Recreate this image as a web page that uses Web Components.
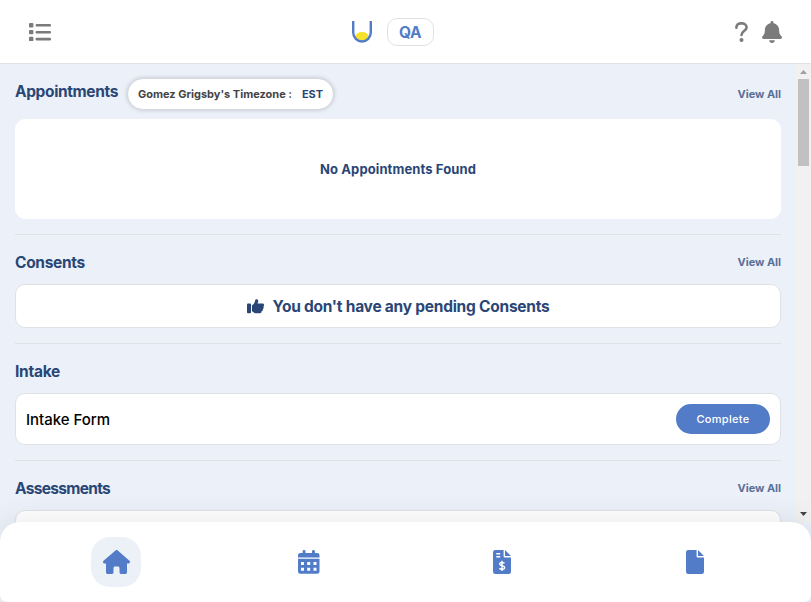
<!DOCTYPE html>
<html lang="en"><head><meta charset="utf-8"><title>Home</title>
<style>body{margin:0;width:811px;height:602px;overflow:hidden;background:#ecf1f9;font-family:Inter,"Liberation Sans",sans-serif}</style></head>
<body><portal-app></portal-app>
<script>
const define=(name,html,after)=>customElements.define(name,class extends HTMLElement{
  connectedCallback(){
    if(this.shadowRoot)return;
    const t=document.createElement('template');t.innerHTML=html;
    this.attachShadow({mode:'open'}).append(t.content.cloneNode(true));
    if(after)after(this);
  }});

// Text that spreads its letters to an exact line width.
define('fit-text','<style>:host{display:inline-block;white-space:nowrap}span{display:inline-block}</style><span><slot></slot></span>',el=>{
  const s=el.shadowRoot.querySelector('span'),w=+el.getAttribute('w'),n=el.textContent.length;
  const fit=()=>{s.style.letterSpacing='0';s.style.letterSpacing=((w-s.getBoundingClientRect().width)/n)+'px'};
  fit();
});

const icons={
list:['0 0 22 18','<rect x="0" y="0" width="4.4" height="4.4" rx="1"/><rect x="0" y="6.9" width="4.4" height="4.4" rx="1"/><rect x="0" y="13.8" width="4.4" height="4.4" rx="1"/><rect x="6.6" y="1" width="15.4" height="2.6" rx="1.2"/><rect x="6.6" y="7.9" width="15.4" height="2.6" rx="1.2"/><rect x="6.6" y="14.8" width="15.4" height="2.6" rx="1.2"/>'],
logo:['0 0 20 22','<ellipse cx="10" cy="15.8" rx="6.8" ry="4.8" fill="#f6e22c"/><path d="M1.2 0V11.6a8.8 8.9 0 0 0 17.6 0V0" fill="none" stroke="#527cc8" stroke-width="2.4"/>'],
help:['0 0 13 20','<path d="M1.4 5.8V5.3A4 4 0 0 1 5.4 1.4H7.4A4.2 4.2 0 0 1 11.6 5.5C11.6 8.6 6.5 9 6.5 13" fill="none" stroke="currentColor" stroke-width="2.6" stroke-linecap="round"/><circle cx="6.5" cy="17.9" r="2"/>'],
bell:['0 0 448 512','<path d="M224 0c-17.7 0-32 14.3-32 32V51.200C119 66 64 130.600 64 208v18.800c0 47-17.300 92.400-48.500 127.600l-7.400 8.300c-8.400 9.400-10.400 22.900-5.300 34.400S19.400 416 32 416H416c12.600 0 24-7.400 29.200-18.900s3.100-25-5.300-34.400l-7.400-8.300C401.300 319.200 384 273.900 384 226.800V208c0-77.400-55-142-128-156.800V32c0-17.700-14.300-32-32-32zm45.300 493.300c12-12 18.700-28.300 18.700-45.300H160c0 17 6.700 33.300 18.700 45.300S207 512 224 512s33.300-6.700 45.300-18.700z"/>'],
thumb:['0 0 16 15','<rect y="4.6" width="3.8" height="9.7" rx="1"/><path d="M4.7 6.2C7 5 7.300 3.300 7.700 1.200C8 0 9 0 9.800.5C11 1.300 10.700 3 9.800 4.600H14.500C16.300 4.600 16.500 7 15.300 7.500C16.200 8.400 15.700 9.700 14.800 10C15.300 11 14.700 12 13.700 12.100C14 13.300 13.200 14.300 12.200 14.300H8.500C6.700 14.300 5.800 12.700 4.700 12.200Z"/>'],
home:['0 0 576 512','<path d="M575.8 255.5c0 18-15 32.1-32 32.1h-32l.7 160.2c0 2.700-.2 5.400-.5 8.100V472c0 22.100-17.900 40-40 40H392c-22.100 0-40-17.900-40-40V384c0-17.700-14.300-32-32-32H256c-17.700 0-32 14.300-32 32v88c0 22.100-17.900 40-40 40H104c-22.100 0-40-17.900-40-40V287.600H32c-18 0-32-14-32-32.100c0-9 3-17 10-24L266.400 8c7-7 15-8 22-8s15 2 21 7L564.800 231.500c8 7 12 15 11 24z"/>'],
calendar:['0 0 22 24','<path fill-rule="evenodd" d="M0 8.800H21.500V21.500a2.300 2.300 0 0 1-2.300 2.300H2.300A2.300 2.300 0 0 1 0 21.500ZM3 12v3h3v-3ZM9.200 12v3h3v-3ZM15.500 12v3h3v-3ZM3 17.800v3h3v-3ZM9.200 17.800v3h3v-3ZM15.500 17.800v3h3v-3Z"/><path d="M0 7.400V5.300A2.300 2.300 0 0 1 2.300 3H4.600V1.400a1.400 1.400 0 0 1 2.900 0V3H14V1.400a1.400 1.400 0 0 1 2.900 0V3H19.200a2.300 2.300 0 0 1 2.300 2.300V7.400Z"/>'],
file:['0 0 18 24','<path d="M2.300 0H10.600V6.200a1.300 1.300 0 0 0 1.300 1.300H18V21.700A2.300 2.300 0 0 1 15.700 24H2.300A2.300 2.300 0 0 1 0 21.700V2.300A2.300 2.300 0 0 1 2.300 0ZM12 0L18 6H12Z"/>'],
invoice:['0 0 18 24','<path d="M2.300 0H10.600V6.200a1.300 1.300 0 0 0 1.300 1.300H18V21.700A2.300 2.300 0 0 1 15.700 24H2.300A2.300 2.300 0 0 1 0 21.700V2.300A2.300 2.300 0 0 1 2.300 0ZM12 0L18 6H12Z"/><path d="M3.300 3.700H7.200M3.300 6.700H7.200M9 10.700V21M11.600 13.200C8.800 12 6.700 12.300 6.700 13.900C6.700 16.200 11.700 15.200 11.700 17.700C11.700 19.600 8.700 19.600 6.300 18.500" fill="none" stroke="#fff" stroke-width="1.400"/>'],
up:['0 0 8 4','<path d="M0 4L4 0L8 4Z"/>'],
down:['0 0 8 4','<path d="M0 0L4 4L8 0Z"/>']};
define('ui-icon','<style>:host{display:block;flex:none}svg{display:block;width:100%;height:100%;fill:currentColor}</style><svg preserveAspectRatio="none"></svg>',el=>{
  const [box,d]=icons[el.getAttribute('name')],s=el.shadowRoot.querySelector('svg');s.setAttribute('viewBox',box);s.innerHTML=d;
});

define('top-bar',`<style>:host{display:grid;grid-template-columns:1fr auto 1fr;align-items:center;box-sizing:border-box;height:64px;padding:0 29px 0 28px;background:#fff;border-bottom:1px solid #dee2e6;color:#7b7b7b}
.brand{display:flex;gap:15px;align-items:center;margin-left:-25px}.qa{box-sizing:border-box;width:47px;height:28px;border:1px solid #dee2e6;border-radius:10px;display:grid;place-items:center;color:#527cc8;font:700 15.5px/20px Inter,sans-serif}.qa fit-text{padding-top:2px}
.right{display:flex;gap:14px;justify-content:flex-end;align-items:center}</style>
<ui-icon name="list" style="width:22px;height:18px;margin-left:.5px"></ui-icon>
<div class="brand"><ui-icon name="logo" style="width:20px;height:22px"></ui-icon><div class="qa"><fit-text w="22">QA</fit-text></div></div>
<div class="right"><ui-icon name="help" style="width:13px;height:20px"></ui-icon><ui-icon name="bell" style="width:20px;height:22px"></ui-icon></div>`);

define('page-section',`<style>:host{display:block;padding-bottom:15px;border-bottom:1px solid #dee2e6;color:#2a4676}
header{box-sizing:border-box;height:var(--head,49px);padding-top:var(--top,5px);display:flex;align-items:center}
h2{margin:0;padding-top:var(--drop,2px);font:700 15.5px/20px Inter,sans-serif}a{margin-left:auto;margin-top:var(--link,0);font-size:11px;line-height:16px;font-weight:700;color:#5a6f98}</style>
<header><h2></h2><slot name="badge"></slot><a><fit-text w="43.500">View All</fit-text></a></header><slot></slot>`,el=>{
  const r=el.shadowRoot,t=document.createElement('fit-text');t.setAttribute('w',el.getAttribute('w'));t.textContent=el.getAttribute('heading');
  r.querySelector('h2').append(t);if(el.hasAttribute('nolink'))r.querySelector('a').remove();
});
define('zone-pill',`<style>:host{box-sizing:border-box;width:207px;height:32px;margin:5px 0 0 9px;border:1px solid #d4d9df;border-radius:16px;background:#fff;box-shadow:0 0 4px #0003;display:flex;align-items:center;justify-content:space-between;padding:0 10px;font-size:11px;font-weight:700;color:#444}b{font-weight:700;color:#2a4676}</style>
<fit-text w="154">Gomez Grigsby's Timezone :</fit-text><b><fit-text w="21">EST</fit-text></b>`);
define('ui-card','<style>:host{box-sizing:border-box;display:flex;align-items:center;justify-content:center;border:1px solid #dee2e6;border-radius:10px;background:#fff}</style><slot></slot>');
define('scroll-bar',`<style>:host{width:15px;flex:none;background:#f1f1f1;display:flex;flex-direction:column;align-items:center}
.thumb{width:11px;height:87px;background:#c1c1c1;margin-top:5px}</style>
<ui-icon name="up" style="width:7px;height:4px;margin-top:6px;color:#a0a0a0"></ui-icon><div class="thumb"></div><ui-icon name="down" style="width:7px;height:4px;margin-top:auto;margin-bottom:6px;color:#444"></ui-icon>`);
define('bottom-nav',`<style>:host{position:relative;box-sizing:border-box;flex:none;height:80px;padding:0 20px;display:grid;grid-template-columns:repeat(4,1fr);align-items:center;justify-items:center;background:#fff;border-radius:20px 20px 7px 7px;box-shadow:0 0 30px #0000001a;color:#527cc8}
.on{width:50px;height:50px;border-radius:19px;background:#ecf1f8;display:grid;place-items:center}</style>
<div class="on"><ui-icon name="home" style="width:27px;height:24px"></ui-icon></div><ui-icon name="calendar" style="width:22px;height:24px"></ui-icon><ui-icon name="invoice" style="width:18px;height:24px"></ui-icon><ui-icon name="file" style="width:18px;height:24px"></ui-icon>`);

define('portal-app',`<style>:host{display:flex;flex-direction:column;height:602px}
.view{display:flex;height:458px;flex:none;overflow:hidden}main{flex:1;padding:0 15px;background:#ecf1f9}
.first{--head:55px;--top:0px;--link:5px;--drop:0px}.empty{height:100px;border-color:#fff;font-size:13px;font-weight:700}
.consent{height:44px;gap:9px;font:700 15.5px/20px Inter,sans-serif}.consent fit-text,.intake>fit-text{padding-top:2px}.intake{height:52px;justify-content:space-between;padding:0 10px;color:#000;font:500 15px/20px Inter,sans-serif}
button{width:94px;height:30px;padding:0;border:0;border-radius:15px;background:#527cc8;color:#fff;font:500 11px Inter,sans-serif}</style>
<top-bar></top-bar><div class="view"><main>
<page-section class="first" heading="Appointments" w="103"><zone-pill slot="badge"></zone-pill><ui-card class="empty"><fit-text w="156">No Appointments Found</fit-text></ui-card></page-section>
<page-section heading="Consents" w="70"><ui-card class="consent"><ui-icon name="thumb" style="width:17px;height:15px"></ui-icon><fit-text w="277">You don't have any pending Consents</fit-text></ui-card></page-section>
<page-section heading="Intake" w="45" nolink><ui-card class="intake"><fit-text w="84">Intake Form</fit-text><button><fit-text w="53">Complete</fit-text></button></ui-card></page-section>
<page-section heading="Assessments" w="95"><ui-card style="height:52px"></ui-card></page-section>
</main><scroll-bar></scroll-bar></div><bottom-nav></bottom-nav>`);
</script></body></html>
